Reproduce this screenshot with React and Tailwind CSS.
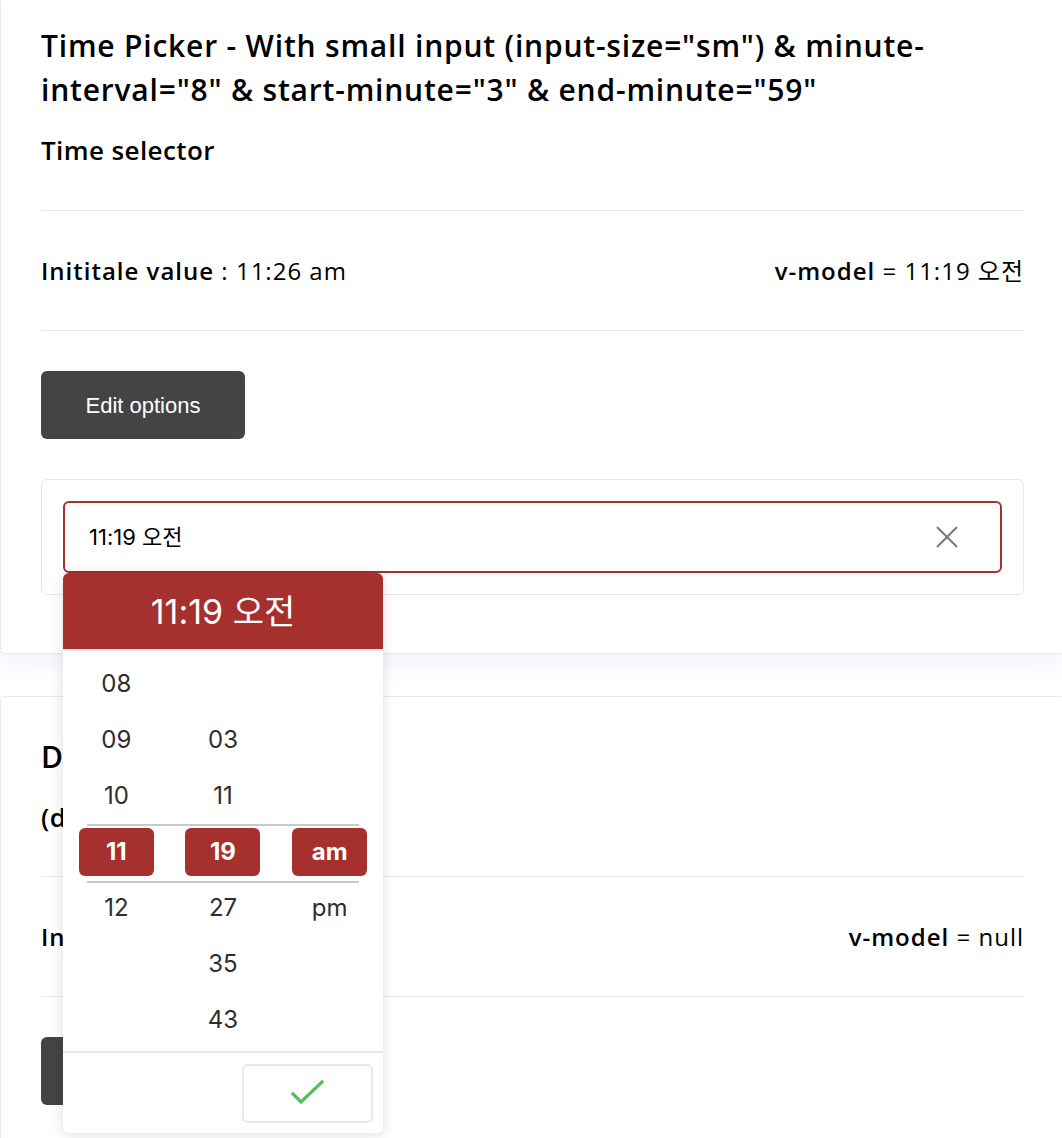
import { X } from 'lucide-react';

const sans = "font-['Open_Sans','Noto_Sans_CJK_KR',sans-serif]";
const sys = "font-['Inter','Noto_Sans_CJK_KR',sans-serif]";

const hours = ['08', '09', '10', '11', '12', '', ''];
const minutes = ['', '03', '11', '19', '27', '35', '43'];
const periods = ['', '', '', 'am', 'pm', '', ''];

const Column = ({ items }) => (
  <div className="flex flex-col">
    {items.map((item, i) =>
      i === 3 ? (
        <div key={i} className="h-[56px] flex items-center justify-center">
          <span className="w-[75px] h-[48px] rounded-[6px] bg-[#a5302d] text-white font-bold text-[24px] flex items-center justify-center">
            {item}
          </span>
        </div>
      ) : (
        <div key={i} className="h-[56px] flex items-center justify-center text-[24px] text-[#2e2e2e]">
          {item}
        </div>
      )
    )}
  </div>
);

const TimeDropdown = () => (
  <div className={`absolute left-0 top-full w-[320px] bg-white rounded-[6px] shadow-[0_2px_14px_rgba(0,0,0,0.13)] z-20 ${sys}`}>
    <div className="h-[78px] rounded-t-[6px] bg-[#a5302d] text-white text-[34px] flex items-center justify-center border-b-2 border-[#e8e8e8]">
      11:19 오전
    </div>
    <div className="relative h-[400px] pt-[5px] grid grid-cols-3">
      <Column items={hours} />
      <Column items={minutes} />
      <Column items={periods} />
      {/* selection guide lines */}
      <div className="absolute left-[24px] right-[24px] top-[173px] h-[2px] bg-[#c9c9c9]" />
      <div className="absolute left-[24px] right-[24px] top-[230px] h-[2px] bg-[#c9c9c9]" />
    </div>
    <div className="border-t-2 border-[#e8e8e8] h-[82px] flex items-center justify-end pr-[10px]">
      <button className="w-[131px] h-[59px] rounded-[6px] border-2 border-[#e8e8e8] bg-white flex items-center justify-center">
        <svg width="38" height="30" viewBox="0 0 38 30" fill="none">
          <path d="M4 16 L12 24 L33 4" stroke="#4fc05c" strokeWidth="3.2" strokeLinecap="square" />
        </svg>
      </button>
    </div>
  </div>
);

const ValueRow = ({ initial, model }) => (
  <>
    <div className="h-px bg-[#e8e8e8]" />
    <div className="h-[119px] flex items-center justify-between text-[24px] tracking-[1px] text-black">
      <div>
        <span className="font-semibold">Inititale value</span> : {initial}
      </div>
      <div>
        <span className="font-semibold">v-model</span> = {model}
      </div>
    </div>
    <div className="h-px bg-[#e8e8e8]" />
  </>
);

const EditButton = () => (
  <button className="mt-[40px] w-[204px] h-[68px] rounded-[6px] bg-[#444444] text-white text-[22px] font-['Liberation_Sans',sans-serif]">
    Edit options
  </button>
);

export default function App() {
  return (
    <div className={`w-[1062px] h-[1138px] overflow-hidden bg-white ${sans}`}>
      <div className="flex flex-col gap-[42px] -mt-[4px]">
        {/* first card */}
        <div className="relative z-10 w-[1065px] bg-white border border-[#e8e8e8] rounded-[5px] shadow-[0_10px_24px_rgba(60,80,170,0.07)] px-[40px] pt-[27px] pb-[58px]">
          <h2 className="text-[30px] leading-[44px] tracking-[0.8px] font-semibold text-black">
            Time Picker - With small input (input-size="sm") &amp; minute-
            <br />
            interval="8" &amp; start-minute="3" &amp; end-minute="59"
          </h2>
          <h3 className="mt-[22px] text-[26px] leading-[32px] tracking-[0.4px] font-semibold text-black">Time selector</h3>
          <div className="mt-[44px]">
            <ValueRow initial="11:26 am" model="11:19 오전" />
          </div>
          <EditButton />
          <div className="mt-[40px] border border-[#e8e8e8] rounded-[6px] p-[21px]">
            <div className="relative">
              <div className={`h-[72px] border-2 border-[#a5302d] rounded-[6px] flex items-center justify-between pl-[24px] pr-[34px] text-[22px] text-black ${sys}`}>
                <span>11:19 오전</span>
                <X size={38} strokeWidth={1.2} className="text-[#777] -my-[10px]" />
              </div>
              <TimeDropdown />
            </div>
          </div>
        </div>

        {/* second card */}
        <div className="w-[1065px] bg-white border border-[#e8e8e8] rounded-[5px] px-[40px] pt-[38px] pb-[40px]">
          <h2 className="text-[30px] leading-[44px] tracking-[0.8px] font-semibold text-black">Disabled hours</h2>
          <h3 className="mt-[22px] text-[26px] leading-[32px] tracking-[0.4px] font-semibold text-black">(disabled-hours)</h3>
          <div className="mt-[43px]">
            <ValueRow initial="null" model="null" />
          </div>
          <EditButton />
        </div>
      </div>
    </div>
  );
}
